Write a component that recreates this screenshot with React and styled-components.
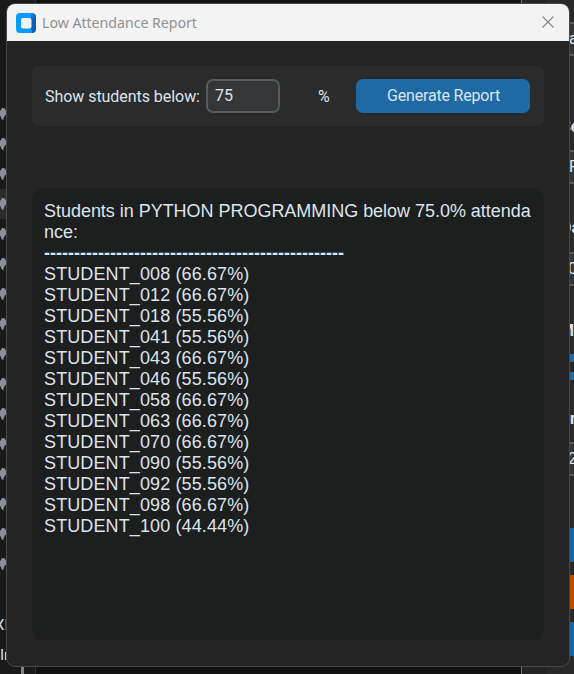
import React from "react";
import styled, { createGlobalStyle } from "styled-components";

const GlobalStyle = createGlobalStyle`
  * { box-sizing: border-box; }
  html, body { margin: 0; background: #191919; overflow: hidden; }
  body { font-family: Roboto, "Liberation Sans", sans-serif; color: #dce4ee; }
`;

const Desktop = styled.div`
  position: relative;
  display: grid;
  grid-template-columns: 36px 485px 53px;
  width: 574px;
  height: 674px;
  overflow: hidden;
  background: #191919;
`;

const Sidebar = styled.div`
  display: flex;
  flex-direction: column;
  height: 674px;
  padding-top: 99px;
  border-right: 1px solid #303030;
  overflow: hidden;
`;

const SidebarRow = styled.div`
  display: flex;
  align-items: center;
  flex: 0 0 30px;
  background: ${(p) => (p.$active ? "#2c2c2c" : "transparent")};
`;

const SidebarText = styled.div`
  flex: 0 0 20px;
  margin-top: ${(p) => p.$gap}px;
  margin-left: ${(p) => p.$shift}px;
  line-height: 20px;
  font-size: 15px;
  white-space: nowrap;
`;

const ScrollThumb = styled.div`
  flex: 0 0 10px;
  width: 3px;
  margin-left: 21px;
  background: #858585;
`;

const Middle = styled.div`
  background: #111111;
`;

const SidePanel = styled.div`
  display: flex;
  flex-direction: column;
  border-left: 1px solid #747474;
  padding-left: 24px;
  background: #242424;
`;

const PanelBody = styled.div`
  display: flex;
  flex-direction: column;
  height: 674px;
  background: #292929;
`;

const Field = styled.div`
  flex: 0 0 34px;
  margin-top: ${(p) => p.$gap}px;
  padding-left: ${(p) => p.$indent}px;
  border-top: 2px solid #565b5e;
  border-bottom: 2px solid #565b5e;
  background: #343638;
  font-size: 16px;
  line-height: 30px;
  white-space: nowrap;
`;

const Caption = styled.div`
  flex: 0 0 20px;
  margin-top: ${(p) => p.$gap}px;
  padding-left: ${(p) => p.$indent}px;
  font-size: 16px;
  font-weight: 700;
  line-height: 20px;
  white-space: nowrap;
`;

const Bar = styled.div`
  flex: 0 0 ${(p) => p.$size}px;
  margin-top: ${(p) => p.$gap}px;
  background: ${(p) => p.$color};
`;

const Dialog = styled.section`
  position: absolute;
  left: 6px;
  top: 3px;
  display: flex;
  flex-direction: column;
  width: 564px;
  height: 664px;
  border: 1px solid #484848;
  border-radius: 9px;
  background: #242424;
  overflow: hidden;
`;

const TitleBar = styled.header`
  display: flex;
  align-items: center;
  flex: 0 0 37px;
  padding: 0 14px 0 9px;
  background: #f3f3f3;
`;

const Title = styled.h1`
  flex: 1;
  margin: 0 0 0 6px;
  font: 400 14.2px/20px "Noto Sans", sans-serif;
  letter-spacing: -0.04px;
  color: #929292;
`;

const CloseButton = styled.button`
  display: flex;
  margin-top: -1px;
  padding: 0;
  border: 0;
  background: none;
`;

const Content = styled.div`
  display: flex;
  flex-direction: column;
  flex: 1;
  padding: 25px;
`;

const FilterBar = styled.div`
  display: flex;
  align-items: center;
  flex: 0 0 60px;
  padding: 0 14px 0 13px;
  border-radius: 7px;
  background: #2b2b2b;
  font-size: 16px;
`;

const Label = styled.label`
  width: 161px;
  letter-spacing: -0.05px;
  white-space: nowrap;
`;

const ThresholdInput = styled.input`
  width: 74px;
  height: 34px;
  padding: 0 7px 2px;
  border: 2px solid #565b5e;
  border-radius: 7px;
  outline: 0;
  background: #343638;
  color: #dce4ee;
  font: 400 16px Roboto, sans-serif;
`;

const Percent = styled.span`
  width: 76px;
  padding-left: 38px;
`;

const GenerateButton = styled.button`
  width: 174px;
  height: 34px;
  padding: 0 0 1px 1px;
  border: 0;
  border-radius: 7px;
  background: #1f6aa5;
  color: #dce4ee;
  font: 400 16px Roboto, sans-serif;
  letter-spacing: -0.18px;
`;

const Report = styled.div`
  flex: 0 0 452px;
  margin-top: 62px;
  padding: 13px 12px;
  border-radius: 11px;
  background: #1d1e1e;
  font: 400 18px/21px "Liberation Sans", sans-serif;
`;

const ReportLine = styled.div`
  width: 490px;
  height: 21px;
  letter-spacing: ${(p) => p.$tracking || 0}px;
  white-space: pre;
`;

const Divider = styled(ReportLine)`
  font-weight: 700;
  letter-spacing: 0.006px;
`;

const PinIcon = () => (
  <svg width="8" height="16" viewBox="0 0 8 16">
    <path
      d="M0 5L1 4L1.5 2.5L3 2L5 2.5L5.5 4L7 5V8L5.5 9L4.5 10V11L3.5 12V14H2.5L1 12L0.8 10.5L0 10Z"
      fill="#899297"
    />
  </svg>
);

const AppIcon = () => (
  <svg width="20" height="20" viewBox="0 0 20 20">
    <rect width="20" height="20" rx="4" fill="#0a9bff" />
    <path d="M15 5L16 0.5Q20 1 20 4V16Q20 19.5 16 20L15 15Z" fill="#0863b5" />
    <path d="M15 1.5L17 0.5L20 3L16 6Z" fill="#0a79d6" />
    <rect x="5" y="5" width="10.5" height="10.5" rx="2" fill="#f3f3f3" />
  </svg>
);

const CloseIcon = () => (
  <svg width="14" height="14" viewBox="0 0 14 14">
    <path d="M1.5 1.5L12.5 12.5M12.5 1.5L1.5 12.5" stroke="#858585" strokeWidth="1.1" />
  </svg>
);

const results = [
  ["008", "66.67"], ["012", "66.67"], ["018", "55.56"], ["041", "55.56"],
  ["043", "66.67"], ["046", "55.56"], ["058", "66.67"], ["063", "66.67"],
  ["070", "66.67"], ["090", "55.56"], ["092", "55.56"], ["098", "66.67"],
  ["100", "44.44"],
];

export default function App() {
  return (
    <>
      <GlobalStyle />
      <Desktop>
        <Sidebar>
          {Array.from({ length: 16 }, (_, i) => (
            <SidebarRow key={i} $active={i === 3}>
              <PinIcon />
            </SidebarRow>
          ))}
          <SidebarText $gap={36} $shift={-5}>XI</SidebarText>
          <SidebarText $gap={10} $shift={0}>In</SidebarText>
          <ScrollThumb />
        </Sidebar>
        <Middle />
        <SidePanel>
          <PanelBody>
            <Field $gap={22} $indent={23}>a</Field>
            <Caption $gap={61} $indent={15}>Se</Caption>
            <Field $gap={13} $indent={23}>F</Field>
            <Caption $gap={34} $indent={15}>Da</Caption>
            <Field $gap={14} $indent={22}>0</Field>
            <Caption $gap={35} $indent={14}>M</Caption>
            <Bar $gap={13} $size={8} $color="#1f6aa5" />
            <Bar $gap={10} $size={8} $color="#1f6aa5" />
            <Caption $gap={29} $indent={24}>r</Caption>
            <Field $gap={13} $indent={22}>2</Field>
            <Bar $gap={52} $size={34} $color="#1f6396" />
            <Bar $gap={13} $size={34} $color="#bc4c00" />
            <Bar $gap={13} $size={34} $color="#1f6396" />
          </PanelBody>
        </SidePanel>
        <Dialog>
          <TitleBar>
            <AppIcon />
            <Title>Low Attendance Report</Title>
            <CloseButton aria-label="Close">
              <CloseIcon />
            </CloseButton>
          </TitleBar>
          <Content>
            <FilterBar>
              <Label htmlFor="threshold">Show students below:</Label>
              <ThresholdInput id="threshold" defaultValue="75" />
              <Percent>%</Percent>
              <GenerateButton>Generate Report</GenerateButton>
            </FilterBar>
            <Report>
              <ReportLine $tracking={-0.03}>
                Students in PYTHON PROGRAMMING below 75.0% attenda
              </ReportLine>
              <ReportLine>nce:</ReportLine>
              <Divider>{"-".repeat(50)}</Divider>
              {results.map(([id, rate]) => (
                <ReportLine key={id} $tracking={0.12}>
                  {`STUDENT_${id} (${rate}%)`}
                </ReportLine>
              ))}
            </Report>
          </Content>
        </Dialog>
      </Desktop>
    </>
  );
}
